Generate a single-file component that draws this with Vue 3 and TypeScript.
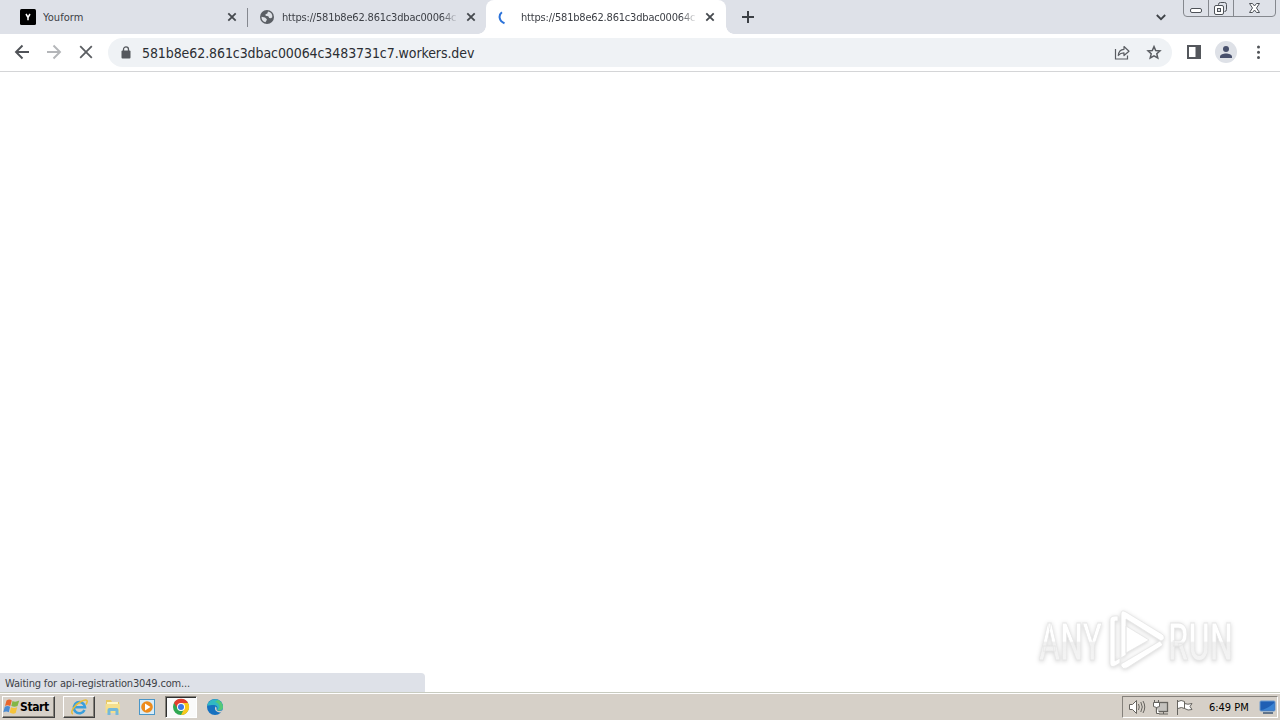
<script setup lang="ts">
interface Tab { title: string; kind: 'youform' | 'globe' | 'loading'; active: boolean }
const tabs: Tab[] = [
  { title: 'Youform', kind: 'youform', active: false },
  { title: 'https://581b8e62.861c3dbac00064c', kind: 'globe', active: false },
  { title: 'https://581b8e62.861c3dbac00064c', kind: 'loading', active: true },
]
const address = '581b8e62.861c3dbac00064c3483731c7.workers.dev'
</script>

<template>
  <div class="screen">
    <header class="tabs">
      <div v-for="(t, i) in tabs" :key="i" class="tab" :class="[t.kind, { active: t.active }]">
        <svg class="fav" width="16" height="16" viewBox="0 0 16 16">
          <template v-if="t.kind === 'youform'">
            <rect width="16" height="16" rx="1.500" fill="#000" />
            <path d="M6 5l2 3.4L10 5M8 8v3.2" fill="none" stroke="#fff" stroke-width="1.5" />
          </template>
          <template v-else-if="t.kind === 'globe'">
            <circle cx="8" cy="8" r="7" fill="#5a5e64" />
            <path d="M9 2.4L8.3 4.4 6.5 5.2 6.6 6.8 9.3 7.2 10.2 9 12 9.2 13.3 8.3A5.5 5.5 0 0 0 9 2.4zM2.5 7.8L6 8.6 7.9 10.3 7.4 11.8 6.4 13.3A5.5 5.5 0 0 1 2.5 7.8z" fill="#dee1e6" />
          </template>
          <path v-else d="M3.900 3.200C.300 6 .700 12 6.500 14.300" fill="none" stroke="#2b72d9" stroke-width="2" />
        </svg>
        <span class="title" :class="{ fade: t.kind !== 'youform' }">{{ t.title }}</span>
        <svg class="close" width="10" height="10" viewBox="0 0 10 10"><path d="M1.3 1.3l7.4 7.4M8.7 1.3L1.3 8.7" stroke="#45494e" stroke-width="1.8" /></svg>
      </div>
      <svg class="plus" width="12" height="12" viewBox="0 0 12 12"><path d="M6 0v12M0 6h12" stroke="#3c4045" stroke-width="2" /></svg>
      <svg class="chev" width="10" height="7" viewBox="0 0 10 7"><path d="M.8 1L5 5.2 9.2 1" fill="none" stroke="#3f4348" stroke-width="1.8" /></svg>
      <svg class="winbtns" width="94" height="17" viewBox="0 0 94 17" fill="none">
        <path d="M.5 0v13q0 3.5 3.5 3.5h85q3.500 0 3.500-3.500V0M25.500 0v16M50.500 0v16" stroke="#85888e" />
        <rect x="7.500" y="8.500" width="11" height="4" rx="1.500" fill="#fff" stroke="#4e5258" />
        <path d="M35.500 5.500v-1q0-2 2-2h4q2 0 2 2v5q0 2-2 2" stroke="#4e5258" />
        <rect x="31.500" y="5.500" width="9" height="9" rx="1.500" fill="#fff" stroke="#4e5258" />
        <rect x="34.500" y="8.500" width="3" height="3" fill="#dee1e6" stroke="#4e5258" />
        <path d="M66.500 3.500h3l2 2.500 2-2.500h3L73.500 8l3 4.500h-3l-2-2.500-2 2.500h-3L69.500 8z" fill="#fff" stroke="#4e5258" />
      </svg>
    </header>

    <nav class="toolbar">
      <svg class="nav" width="100" height="36" viewBox="0 0 100 36" fill="none" stroke-width="1.900">
        <path d="M29 18H16.500M22.500 11.500L16 18l6.500 6.500" stroke="#505358" />
        <path d="M47 18h12.500M53.500 11.500L60 18l-6.500 6.500" stroke="#b4b6b9" />
        <path d="M80.200 12.200l11.600 11.600M91.800 12.200L80.200 23.800" stroke="#5b5e62" stroke-width="1.800" />
      </svg>
      <div class="omnibox">
        <svg class="lock" width="10" height="13" viewBox="0 0 10 13"><rect x=".500" y="4.500" width="9" height="8" rx="1" fill="#55585d" /><path d="M2.500 5V3.400a2.500 2.500 0 0 1 5 0V5" fill="none" stroke="#55585d" stroke-width="1.300" /></svg>
        <span class="url">{{ address }}</span>
        <svg class="share" width="52" height="18" viewBox="0 0 52 18" fill="none" stroke="#5a5d62">
          <path d="M2.500 6v10h12v-3.500" stroke-width="1.200" />
          <path d="M5.300 12.500C5.600 8.500 7.500 6.500 11 6.300V3.500l5 4.700-5 4.300V9.900c-2.600 0-4.200.700-5.700 2.600z" stroke-width="1.200" stroke-linejoin="round" />
          <path d="M41 3.600l1.700 3.900 4.300.400-3.200 2.900 1 4.200L41 12.800 37.200 15l1-4.200L35 7.900l4.300-.400z" stroke-width="1.500" />
        </svg>
      </div>
      <svg class="actions" width="108" height="36" viewBox="0 0 108 36">
        <rect x="16" y="12" width="12" height="12" fill="#fff" stroke="#54575c" stroke-width="2" /><rect x="23.500" y="11" width="5.500" height="14" fill="#54575c" />
        <circle cx="54" cy="18" r="11" fill="#dee1e7" /><circle cx="54" cy="15" r="3" fill="#48506c" /><path d="M48 24v-1.200c0-2 3.500-3.200 6-3.200s6 1.200 6 3.200V24z" fill="#48506c" />
        <g fill="#505357"><circle cx="86.500" cy="13" r="1.500" /><circle cx="86.500" cy="18.200" r="1.500" /><circle cx="86.500" cy="23.400" r="1.500" /></g>
      </svg>
    </nav>

    <main class="page">
      <svg class="watermark" width="220" height="80" viewBox="0 0 220 80">
        <defs>
          <linearGradient id="fill" x1="0" y1="0" x2="0" y2="80" gradientUnits="userSpaceOnUse">
            <stop offset=".5" stop-color="#fff" /><stop offset=".52" stop-color="#f0f0f0" /><stop offset="1" stop-color="#f8f8f8" />
          </linearGradient>
        </defs>
        <g class="shade" stroke="#e6e6e6" stroke-width=".8">
          <text x="8" y="59" fill="url(#fill)" textLength="63" lengthAdjust="spacingAndGlyphs">ANY</text>
          <text x="137" y="59" fill="url(#fill)" textLength="65" lengthAdjust="spacingAndGlyphs">RUN</text>
          <g fill="#fff" fill-rule="evenodd">
            <path d="M79 19q0-4 5-4h3v5h-3v40l5-3v5l-5 3q-5 2-5-3z" />
            <path d="M90 13q0-5 5-2l36 22q4 3 1 6l-2 1-35-22v36l-5 3zM95 25v27l23-13z" />
            <path d="M90 63l39-23 3 4-36 23q-4 2-6-2z" />
          </g>
        </g>
      </svg>
      <div class="status">Waiting for api-registration3049.com...</div>
    </main>

    <footer class="taskbar">
      <div class="start">
        <svg width="17" height="16" viewBox="0 0 17 16"><path d="M3.500 1.500q3-1.800 5.300 0L7.300 7q-3-1.500-5.300 0z" fill="#e8652c" /><path d="M9.500 2q3 1.500 6.800-.500L14.500 7q-3 1.500-6.200 0z" fill="#83b646" /><path d="M1.800 7.800q3-1.500 5.300 0l-1.300 5.500q-2.500-1.800-5.500 0z" fill="#4a8bd3" /><path d="M8 8.200q3 1.500 6.200 0l-1.500 5.800q-3 1.500-6-.500z" fill="#f5c33b" /></svg>
        <b>Start</b>
      </div>
      <div class="task raised"><svg width="18" height="18" viewBox="0 0 18 18"><path d="M14.500 12A5.600 5.600 0 1 1 15 9.300H5" fill="none" stroke="#3a9fdc" stroke-width="2.600" /><path d="M3 16C-.500 15 4 7 11 3.500s7 0 5 3" fill="none" stroke="#e9bd35" stroke-width="1.500" /></svg></div>
      <div class="task"><svg width="18" height="18" viewBox="0 0 18 18"><path d="M2 2h5l1 2h7v11H2z" fill="#e8c965" /><path d="M3 4h11v3H3z" fill="#fff7c7" /><path d="M1.500 6h14.500v9H1.500z" fill="#f5df8d" /><path d="M3.500 17v-5q0-2 2-2h7q2 0 2 2v5h-3v-4h-5v4z" fill="#74b9da" /></svg></div>
      <div class="task"><svg width="18" height="18" viewBox="0 0 18 18"><rect x="1.500" y="1.500" width="15" height="15" fill="#d8ecf8" stroke="#4a96c8" /><circle cx="9" cy="9" r="5.800" fill="#ed8b1c" /><path d="M7 5.500L12.500 9 7 12.500z" fill="#fff" /></svg></div>
      <div class="task pressed"><svg width="18" height="18" viewBox="0 0 18 18"><circle cx="9" cy="9" r="8" fill="#30a852" /><path d="M2 5A8 8 0 0 1 16 5H9L6 11z" fill="#e43e2f" /><path d="M9 5h7A8 8 0 0 1 9 17l3-6z" fill="#fac81b" /><circle cx="9" cy="9" r="4" fill="#fff" /><circle cx="9" cy="9" r="3" fill="#3b78e7" /></svg></div>
      <div class="task"><svg width="18" height="18" viewBox="0 0 18 18"><circle cx="9" cy="9" r="8" fill="#1671c0" /><path d="M1.200 7.500A8 8 0 0 1 17 9c0 3-3 4-6 3 1-1 1-5-3-5-3 0-5 .500-6.800.500z" fill="#31b8c4" /><path d="M12 2a8 8 0 0 1 5 7c0 3-3 4-5.500 3.200C15 10 14 5 9 4z" fill="#55c878" /><path d="M9.500 8.500c2 1.500.500 2.500 1.500 3.700s4 1 5.500 0l-1 2c-4 1-8-2-6-5.700z" fill="#d6d0c8" /></svg></div>
      <div class="tray">
        <svg width="68" height="18" viewBox="0 0 68 18" fill="none" stroke="#66645f">
          <path d="M1.500 6.500h3l4-4v13l-4-4h-3z" fill="#fff" /><path d="M10.500 6q1.500 3 0 6M12.800 4q3 5 0 10M15 3q3.500 6 0 12" />
          <rect x="28.500" y="4.500" width="11" height="9" fill="#c4c2be" stroke-width="1.300" /><path d="M31 16h9M35.500 14v2" /><path d="M26.500 2v3M30.500 2v3M25.500 4.500h6v4q-3 2-6 0zM28.500 9.500v6h3" fill="#fff" />
          <path d="M49.500 2v15M50 3.500q3-2 6.500 0v7q-3-2-6.500 0M56.500 5.500q3 1.500 7.500 0l-2 3 2 3q-4 1.500-7.500-1z" fill="#fff" />
        </svg>
        <span class="time">6:49 PM</span>
        <svg class="display" width="17" height="15" viewBox="0 0 17 15"><rect x="1" y="1" width="15" height="10" rx="1" fill="#1f5fb4" stroke="#6b9bd0" /><path d="M2 10Q8 9 15 3v7H2z" fill="#3a83d3" /><path d="M4 13h10" stroke="#3b5676" stroke-width="1.500" /></svg>
      </div>
    </footer>
  </div>
</template>

<style>
html, body { margin: 0; overflow: hidden; background: #fff; }
</style>
<style scoped>
.screen { width: 1280px; height: 720px; display: flex; flex-direction: column; font-family: "DejaVu Sans Condensed", "DejaVu Sans", sans-serif; font-stretch: condensed; color: #3c3f45; background: #fff; }
svg { display: block; flex: none; }
.tabs { position: relative; height: 34px; display: flex; background: #dee1e8; box-sizing: border-box; padding-left: 8px; }
.tab { position: relative; width: 239px; height: 34px; box-sizing: border-box; padding: 0 10px 0 12px; display: flex; align-items: center; }
.tab.youform::after { content: ""; position: absolute; right: -1px; top: 8px; width: 1px; height: 19px; background: #85888f; }
.tab.active { background: #fff; border-radius: 8px 8px 0 0; width: 240px; padding-right: 11px; }
.tab.active::before, .tab.active::after { content: ""; position: absolute; bottom: 0; width: 8px; height: 8px; }
.tab.active::before { left: -8px; background: radial-gradient(circle at 0 0, transparent 7.500px, #fff 8px); }
.tab.active::after { right: -8px; background: radial-gradient(circle at 100% 0, transparent 7.500px, #fff 8px); }
.title { flex: 1; min-width: 0; margin: 1px 8px 0 7px; overflow: hidden; white-space: nowrap; font-size: 11px; letter-spacing: .08px; line-height: 16px; }
.fade { letter-spacing: -.19px; -webkit-mask-image: linear-gradient(90deg, #000 91%, transparent); mask-image: linear-gradient(90deg, #000 91%, transparent); }
.plus { margin: 11px 0 0 16px; }
.chev { margin: 14px 0 0 auto; }
.winbtns { margin: 0 3px 0 17px; }
.toolbar { height: 38px; box-sizing: border-box; border-bottom: 1px solid #d4d5d7; display: flex; align-items: center; background: #fff; }
.nav { margin: -2px 8px 0 0; }
.actions { margin-top: -2px; }
.lock { margin-top: -1px; }
.share { margin: -2px -1px 0 0; }
.omnibox { width: 1064px; height: 29px; border-radius: 15px; background: #eff2f5; display: flex; align-items: center; box-sizing: border-box; padding: 0 8px 0 13px; }
.url { flex: 1; margin: 0 0 0 11px; font-size: 14px; color: #2b2e33; letter-spacing: -.085px; white-space: nowrap; }
.page { position: relative; flex: 1; background: #fff; }
.watermark { position: absolute; left: 1031px; top: 529px; }
.watermark text { font: 500 51px "Roboto", sans-serif; }
.shade { filter: drop-shadow(0 1px 2px #d4d4d4); }
.status { position: absolute; left: 0; bottom: 0; width: 425px; height: 19px; box-sizing: border-box; padding-left: 5px; border-radius: 0 4px 0 0; background: #dee1e8; font-size: 11px; line-height: 21px; letter-spacing: -.17px; color: #404247; }
.taskbar { height: 28px; background: #d6d0c8; border-top: 1px solid #c8cbc0; box-shadow: inset 0 1px #fff; box-sizing: border-box; display: flex; align-items: center; padding: 2px 2px 1px; }
.start { width: 53px; height: 22px; box-sizing: border-box; border: 1px solid; border-color: #fff #404040 #404040 #fff; box-shadow: inset -1px -1px #858179; display: flex; align-items: center; color: #000; margin-right: 8px; }
.start b { font: 700 12px "DejaVu Sans Condensed", sans-serif; letter-spacing: -.4px; }
.task { width: 32px; height: 22px; box-sizing: border-box; display: flex; align-items: center; justify-content: center; margin-right: 2px; }
.raised { border: 1px solid; border-color: #fff #404040 #404040 #fff; box-shadow: inset -1px -1px #858179; }
.pressed { border: 1px solid; border-color: #858179 #fff #fff #858179; box-shadow: inset 1px 1px #303030; background: #fafafa; }
.tray { width: 156px; height: 22px; margin-left: auto; box-sizing: border-box; border: 1px solid; border-color: #85817b #fff #fff #85817b; display: flex; align-items: center; padding-left: 5px; }
.time { margin-left: 13px; font-size: 11px; color: #000; white-space: nowrap; letter-spacing: -.02px; }
.display { margin: 1px 1px 0 auto; }
</style>
